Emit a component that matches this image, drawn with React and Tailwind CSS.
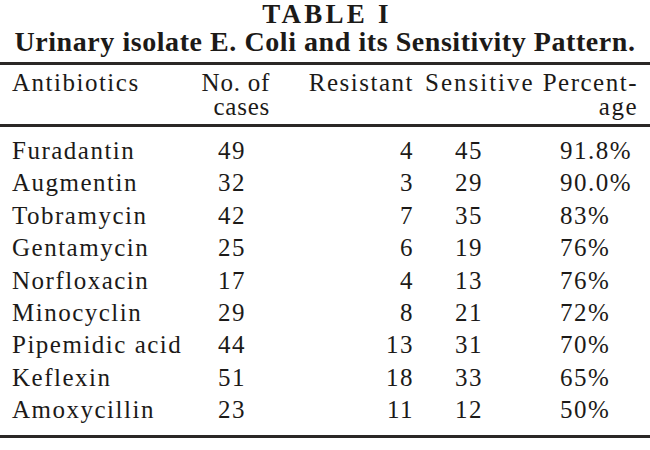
import React from "react";

const rows = [
  ["Furadantin", "49", "4", "45", "91.8%"],
  ["Augmentin", "32", "3", "29", "90.0%"],
  ["Tobramycin", "42", "7", "35", "83%"],
  ["Gentamycin", "25", "6", "19", "76%"],
  ["Norfloxacin", "17", "4", "13", "76%"],
  ["Minocyclin", "29", "8", "21", "72%"],
  ["Pipemidic acid", "44", "13", "31", "70%"],
  ["Keflexin", "51", "18", "33", "65%"],
  ["Amoxycillin", "23", "11", "12", "50%"],
];

const cols = "grid grid-cols-[180px_90px_132px_126px_100px] whitespace-nowrap";

export default function App() {
  return (
    <div
      className="w-[650px] h-[450px] bg-white text-[#1c1a18] overflow-hidden"
      style={{ fontFamily: '"Liberation Serif", "Times New Roman", serif' }}
    >
      <h1 className="text-center text-[27px] leading-[28px] font-bold tracking-[0.12em] pl-[4px]">
        TABLE I
      </h1>
      <h2 className="text-center text-[28px] leading-[28px] font-bold tracking-[0.02em]">
        Urinary isolate E. Coli and its Sensitivity Pattern.
      </h2>

      <div className="mt-[6px] h-[3px] bg-[#2a2826]" />

      <div className={`${cols} px-3 pt-[6px] h-[59px] text-[25px] leading-[24px] tracking-[0.06em]`}>
        <div>Antibiotics</div>
        <div className="text-right pr-[12px] tracking-[0.03em]">
          No. of
          <br />
          cases
        </div>
        <div className="text-right">Resistant</div>
        <div className="pl-[11px] tracking-[0.08em]">Sensitive</div>
        <div className="text-right pr-[2px]">
          Percent-
          <br />
          age
        </div>
      </div>

      <div className="h-[3px] bg-[#2a2826]" />

      <div className="pt-[8px] text-[25px] leading-[32.4px] tracking-[0.06em]">
        {rows.map((r) => (
          <div key={r[0]} className={`${cols} px-3`}>
            <div>{r[0]}</div>
            <div className="pl-[26px]">{r[1]}</div>
            <div className="text-right">{r[2]}</div>
            <div className="pl-[41px]">{r[3]}</div>
            <div className="pl-[20px]">{r[4]}</div>
          </div>
        ))}
      </div>

      <div className="mt-[8px] h-[3px] bg-[#2a2826]" />
    </div>
  );
}
